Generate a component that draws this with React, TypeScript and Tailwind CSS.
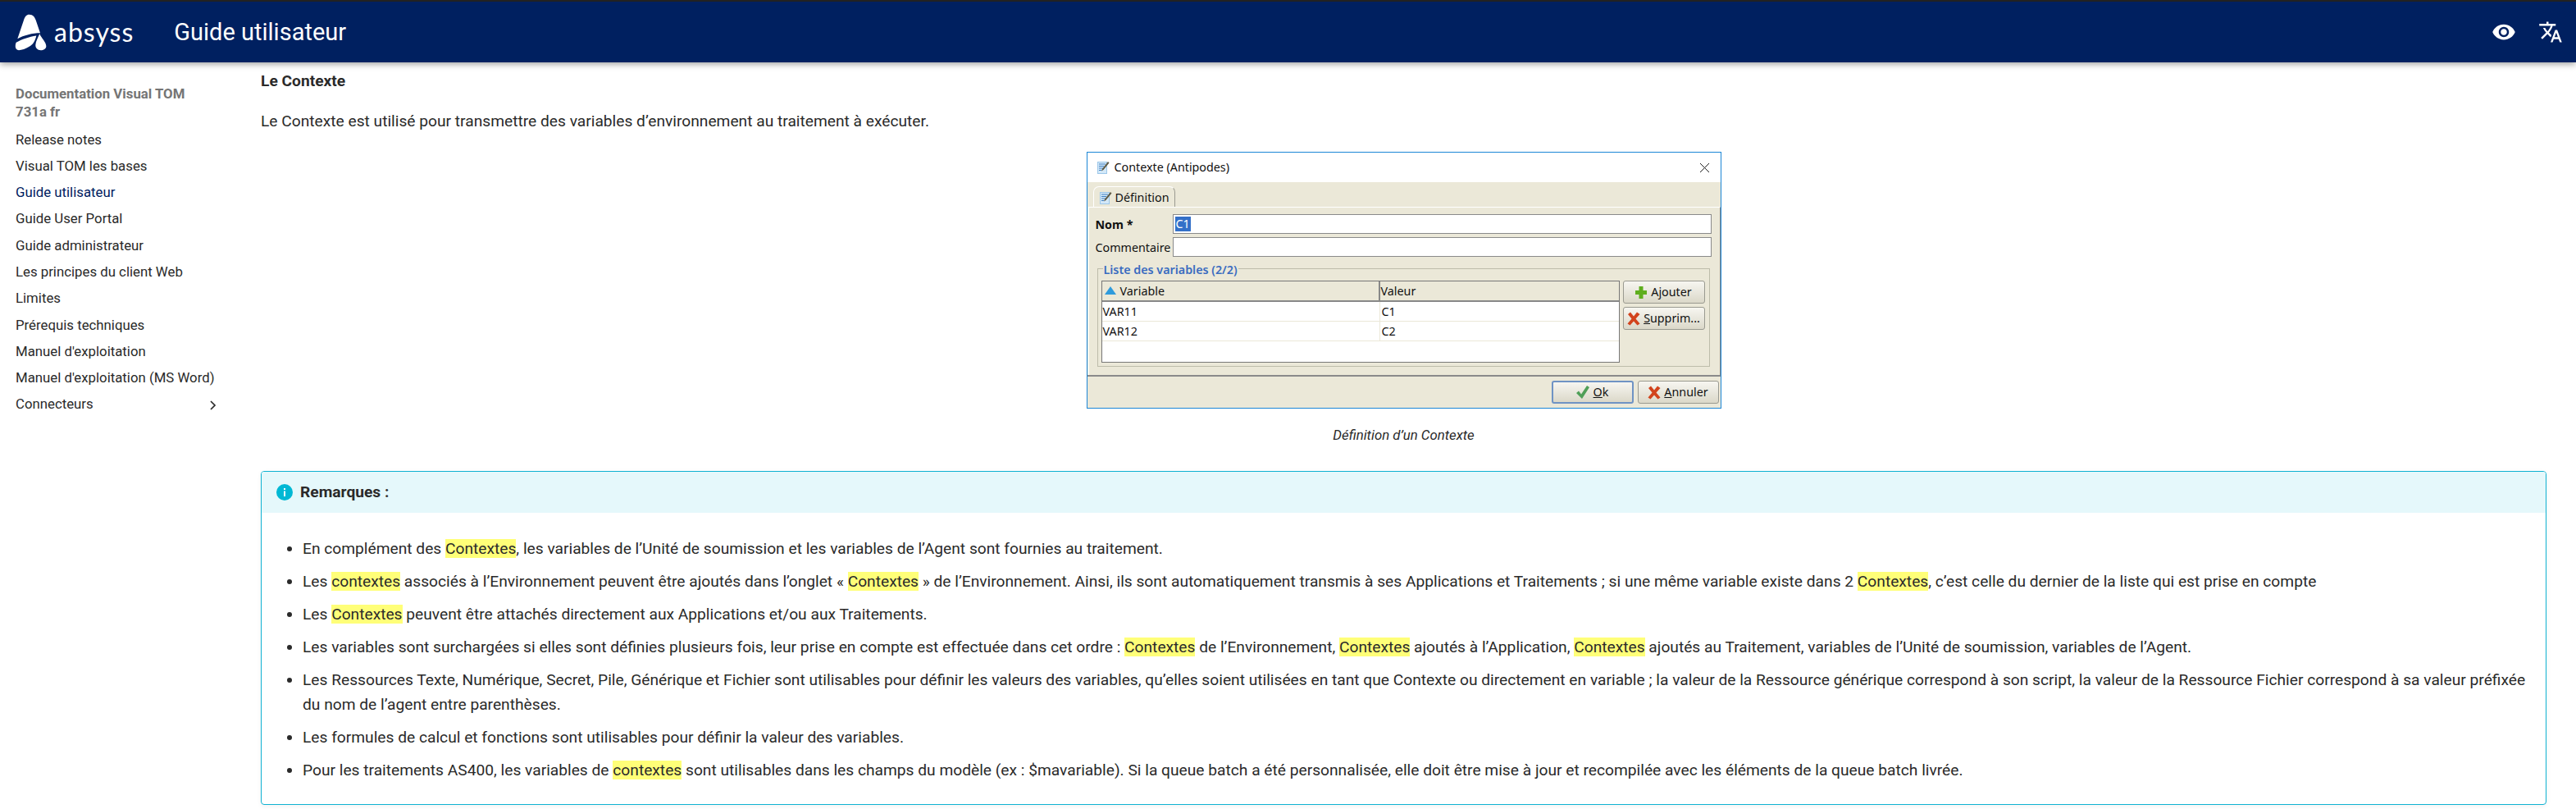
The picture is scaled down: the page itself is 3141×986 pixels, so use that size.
import React from 'react';

const navItems = [
  'Release notes',
  'Visual TOM les bases',
  'Guide utilisateur',
  'Guide User Portal',
  'Guide administrateur',
  'Les principes du client Web',
  'Limites',
  'Prérequis techniques',
  "Manuel d'exploitation",
  "Manuel d'exploitation (MS Word)",
];

const Mark = ({ children }: { children: React.ReactNode }) => (
  <mark className="bg-[#ffff78] text-inherit">{children}</mark>
);

const NoteIcon = () => (
  <svg width="15" height="16" viewBox="0 0 15 16" className="shrink-0">
    <rect x="0.500" y="1.500" width="11" height="14" fill="#d3e8f8" stroke="#9cc7ea" />
    <path d="M2 4h8M2 6.500h6M2 9h5M2 11.500h3" stroke="#3f7fc0" />
    <path d="M13 1l1.500 1.500L7.500 11 5 12.500l1-2.700z" fill="#5d5a45" />
  </svg>
);

const CrossIcon = () => (
  <svg width="16" height="17" viewBox="0 0 16 17" className="shrink-0">
    <path d="M1 3L4 .5 8 5.500 12 .5 15.500 3 10.500 8.500 15.500 14.500 12.500 16.500 8 11.500 3.500 16.500.5 14.500 5.500 8.500z" fill="#d2431c" />
  </svg>
);

const DialogButton = ({
  icon,
  label,
  underline,
  rest,
  focused,
  wide,
  gap,
}: {
  icon: React.ReactNode;
  label?: string;
  underline: string;
  rest: string;
  focused?: boolean;
  wide?: boolean;
  gap?: boolean;
}) => (
  <div
    className={`flex h-[28px] items-center justify-center rounded-[3px] bg-gradient-to-b from-[#f7f6f1] to-[#dbd8c9] ${wide ? 'w-[100px]' : 'w-[99px]'} ${gap ? 'gap-[5px]' : 'gap-[4px]'} ${
      focused ? 'border-2 border-[#6f93c4]' : 'border border-[#9a9a90]'
    }`}
  >
    {icon}
    <span className="pt-[1px]">
      {label}
      <span className="underline">{underline}</span>
      {rest}
    </span>
  </div>
);

export default function App() {
  return (
    <div className="flex h-[986px] w-[3141px] flex-col overflow-hidden bg-white font-['Roboto',sans-serif] text-[#2a2a2a]">
      <header className="z-10 flex h-[76px] shrink-0 items-center border-t-2 border-[#222] bg-[#002060] pl-[18px] pr-[16px] text-white shadow-[0_2px_8px_rgba(0,0,0,0.4)]">
        <svg width="40" height="47" viewBox="25 20 120 140" fill="#fff" className="shrink-0">
          <path d="M78 25C92 25 98 35 102 45L118 92C90 92 58 100 35 113L58 45C62 33 68 25 78 25Z" />
          <path d="M30 127C50 115 78 106 104 102C100 120 92 135 78 142C66 150 50 155 40 155C28 155 24 142 30 127Z" />
          <path d="M116 95C122 110 140 125 140 140C140 150 130 155 120 155C108 155 100 147 101 135C102 122 110 108 116 95Z" />
        </svg>
        <span className="ml-[8px] font-['Lato',sans-serif] text-[32px] leading-none tracking-[1px]">absyss</span>
        <span className="ml-[49px] text-[29px] leading-none">Guide utilisateur</span>
        <div className="ml-auto flex items-center gap-[27px]">
          <svg width="30" height="30" viewBox="0 0 24 24" fill="#fff">
            <path d="M12 4.500C7 4.500 2.730 7.610 1 12c1.730 4.390 6 7.500 11 7.500s9.270-3.110 11-7.500c-1.730-4.390-6-7.500-11-7.500zM12 17c-2.760 0-5-2.240-5-5s2.240-5 5-5 5 2.240 5 5-2.240 5-5 5zm0-8c-1.660 0-3 1.340-3 3s1.340 3 3 3 3-1.340 3-3-1.340-3-3-3z" />
          </svg>
          <svg width="30" height="30" viewBox="0 0 24 24" fill="#fff">
            <path d="M12.870 15.070l-2.540-2.510.03-.03c1.740-1.940 2.980-4.170 3.710-6.530H17V4h-7V2H8v2H1v1.990h11.170C11.500 7.920 10.440 9.750 9 11.350 8.070 10.320 7.300 9.190 6.690 8h-2c.73 1.630 1.730 3.170 2.980 4.560l-5.090 5.020L4 19l5-5 3.110 3.110.76-2.040zM18.500 10h-2L12 22h2l1.120-3h4.750L21 22h2l-4.500-12zm-2.620 7l1.620-4.330L19.120 17h-3.240z" />
          </svg>
        </div>
      </header>

      <div className="flex min-h-0 flex-1">
        <nav className="w-[318px] shrink-0 pl-[19px] pt-[27px] text-[16.800px]">
          <div className="w-[230px] pb-[7px] font-bold leading-[22px] text-[#757575]">Documentation Visual TOM 731a fr</div>
          <ul>
            {navItems.map((item) => (
              <li key={item} className={`flex h-[32.300px] items-center ${item === 'Guide utilisateur' ? 'text-[#002060]' : ''}`}>
                {item}
              </li>
            ))}
            <li className="flex h-[32px] w-[247px] items-center justify-between">
              Connecteurs
              <svg width="12" height="12" viewBox="0 0 12 12" fill="none" stroke="#2a2a2a" strokeWidth="1.700" className="mt-[2px]">
                <path d="M3 1l5 5-5 5" />
              </svg>
            </li>
          </ul>
        </nav>

        <main className="min-w-0 flex-1 pr-[36px] pt-[11px] text-[19.200px]">
          <div className="font-bold leading-[24px]">Le Contexte</div>
          <p className="mt-[25px] leading-[24px]">Le Contexte est utilisé pour transmettre des variables d’environnement au traitement à exécuter.</p>

          <div className="mt-[25px] flex justify-center">
            <div className="w-[774px] border-[1.500px] border-[#1b86d6] bg-[#ebe8d8] font-['Noto_Sans',sans-serif] text-[14.300px] leading-none text-[#111]">
              <div className="flex h-[36px] items-center gap-[6px] bg-white pl-[12px] pr-[13px]">
                <NoteIcon />
                Contexte (Antipodes)
                <svg width="13" height="13" viewBox="0 0 13 13" stroke="#222" className="ml-auto">
                  <path d="M1 1l11 11M12 1L1 12" />
                </svg>
              </div>
              <div className="pl-[1px] pt-[5px]">
                <div className="ml-[6px] flex h-[25px] w-[100px] items-center gap-[4px] rounded-t-[7px] border-l border-r border-t border-l-white border-r-[#9a9a90] border-t-white pl-[7px] pt-[2px]">
                  <NoteIcon />
                  Définition
                </div>
                <div className="border-l border-r border-t border-l-white border-r-[#8a8a8a] border-t-white pb-[10px] pl-[8px] pr-[10px] pt-[8px]">
                  <div className="flex h-[24px] items-center">
                    <span className="w-[94px] pt-[2px] font-bold">Nom *</span>
                    <div className="flex h-[24px] flex-1 items-center border border-[#8a8a8a] bg-white pl-[2px]">
                      <span className="bg-[#3470c8] px-[1px] leading-[18px] text-white">C1</span>
                    </div>
                  </div>
                  <div className="mt-[4px] flex h-[24px] items-center">
                    <span className="w-[94px] pt-[2px]">Commentaire</span>
                    <div className="h-[24px] flex-1 border border-[#8a8a8a] bg-white" />
                  </div>
                  <div className="relative ml-[2px] mr-[2px] mt-[14px] flex gap-[4px] border border-[#bdbcaa] pb-[4px] pl-[4px] pt-[14px]">
                    <span className="absolute left-[6px] top-[-6px] bg-[#ebe8d8] px-[1px] font-semibold text-[#3a6cc0]">Liste des variables (2/2)</span>
                    <div className="h-[100px] w-[632px] border border-[#777] bg-white">
                      <div className="flex h-[25px] border-b-2 border-[#888] bg-[#ebe8d8]">
                        <div className="flex w-[339px] items-center gap-[5px] border-r-2 border-[#888] pl-[3px] pt-[2px]">
                          <svg width="14" height="10" viewBox="0 0 14 10" className="mb-[3px]"><path d="M7 0L14 10H0z" fill="#2f9bdc" /></svg>
                          Variable
                        </div>
                        <div className="flex items-center pl-[1px] pt-[2px]">Valeur</div>
                      </div>
                      {[['VAR11', 'C1'], ['VAR12', 'C2']].map(([name, value]) => (
                        <div key={name} className="flex h-[24px] border-b border-[#ebe8d8]">
                          <div className="flex w-[339px] items-center border-r border-[#ebe8d8] pl-[1px] pt-[2px]">{name}</div>
                          <div className="flex items-center pl-[2px] pt-[2px]">{value}</div>
                        </div>
                      ))}
                    </div>
                    <div className="flex flex-col gap-[4px]">
                      <DialogButton
                        wide
                        gap
                        icon={<svg width="14" height="15" viewBox="0 0 14 15"><path d="M4.500 0h5v5H14v5H9.500v5h-5v-5H0V5h4.500z" fill="#5fae1e" /></svg>}
                        label="A"
                        underline="j"
                        rest="outer"
                      />
                      <DialogButton wide icon={<CrossIcon />} underline="S" rest="upprim..." />
                    </div>
                  </div>
                </div>
              </div>
              <div className="flex h-[40px] items-center justify-end gap-[5px] border-t-2 border-[#8a8a8a] pr-[2px]">
                <DialogButton
                  wide
                  gap
                  icon={<svg width="16" height="16" viewBox="0 0 16 16"><path d="M0 9l3-2.500 3 4L13 0l3 2-9 14z" fill="#4f9f58" /></svg>}
                  underline="O"
                  rest="k"
                  focused
                />
                <DialogButton icon={<CrossIcon />} underline="A" rest="nnuler" />
              </div>
            </div>
          </div>

          <p className="mt-[20px] text-center text-[16.800px] italic leading-[24px]">Définition d’un Contexte</p>

          <section className="mt-[32px] h-[407px] rounded-[4px] border border-[#0fb2d2] shadow-[0_2px_6px_rgba(0,0,0,0.05)]">
            <div className="flex h-[50px] items-center gap-[9px] rounded-t-[3px] bg-[#e5f8fb] pl-[18px] font-bold">
              <svg width="20" height="20" viewBox="0 0 20 20">
                <circle cx="10" cy="10" r="10" fill="#00b8d4" />
                <path d="M9 8.500h2V15H9zM9 5h2v2H9z" fill="#fff" />
              </svg>
              Remarques :
            </div>
            <ul className="list-disc pl-[50px] pr-[20px] pt-[29px] leading-[30px] marker:text-[#2a2a2a]">
              <li className="mb-[10px]">En complément des <Mark>Contextes</Mark>, les variables de l’Unité de soumission et les variables de l’Agent sont fournies au traitement.</li>
              <li className="mb-[10px]">Les <Mark>contextes</Mark> associés à l’Environnement peuvent être ajoutés dans l’onglet « <Mark>Contextes</Mark> » de l’Environnement. Ainsi, ils sont automatiquement transmis à ses Applications et Traitements ; si une même variable existe dans 2 <Mark>Contextes</Mark>, c’est celle du dernier de la liste qui est prise en compte</li>
              <li className="mb-[10px]">Les <Mark>Contextes</Mark> peuvent être attachés directement aux Applications et/ou aux Traitements.</li>
              <li className="mb-[10px]">Les variables sont surchargées si elles sont définies plusieurs fois, leur prise en compte est effectuée dans cet ordre : <Mark>Contextes</Mark> de l’Environnement, <Mark>Contextes</Mark> ajoutés à l’Application, <Mark>Contextes</Mark> ajoutés au Traitement, variables de l’Unité de soumission, variables de l’Agent.</li>
              <li className="mb-[10px]">Les Ressources Texte, Numérique, Secret, Pile, Générique et Fichier sont utilisables pour définir les valeurs des variables, qu’elles soient utilisées en tant que Contexte ou directement en variable ; la valeur de la Ressource générique correspond à son script, la valeur de la Ressource Fichier correspond à sa valeur préfixée du nom de l’agent entre parenthèses.</li>
              <li className="mb-[10px]">Les formules de calcul et fonctions sont utilisables pour définir la valeur des variables.</li>
              <li>Pour les traitements AS400, les variables de <Mark>contextes</Mark> sont utilisables dans les champs du modèle (ex : $mavariable). Si la queue batch a été personnalisée, elle doit être mise à jour et recompilée avec les éléments de la queue batch livrée.</li>
            </ul>
          </section>
        </main>
      </div>
    </div>
  );
}
